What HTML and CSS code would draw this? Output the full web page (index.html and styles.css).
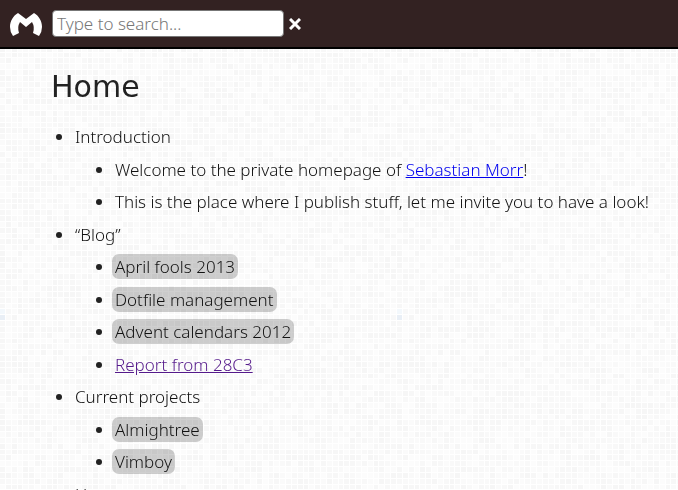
FILE: index.html
```html
<!DOCTYPE html>
<html lang="en">
<head>
<meta charset="utf-8">
<title>Home</title>
<link rel="stylesheet" href="styles.css">
</head>
<body>
<svg class="backdrop" aria-hidden="true"><defs><pattern id="tiles" width="397" height="397" patternUnits="userSpaceOnUse"></pattern></defs><rect width="100%" height="100%" fill="url(#tiles)"/></svg>
<header class="bar">
  <a class="logo" href="#" aria-label="Home"><svg viewBox="0 0 32 24" width="32" height="24"><path fill="#fff" d="M8 0 16 6 24 0C29 3 32 8 32 14Q32 19 29 23L23 20Q25 14 22 9L16 14 10 9Q7 14 9 20L3 23Q0 19 0 14C0 8 3 3 8 0Z"/></svg></a>
  <input class="search" type="text" placeholder="Type to search..." aria-label="Search">
  <button class="clear" type="button" aria-label="Clear search"><svg viewBox="0 0 12 12" width="12" height="12"><path d="M1 1 11 11M11 1 1 11" fill="none" stroke="#fff" stroke-width="3"/></svg></button>
</header>
<main class="page">
  <h1>Home</h1>
  <ul class="tree">
    <li>Introduction
      <ul>
        <li>Welcome to the private homepage of <a href="#">Sebastian Morr</a>!</li>
        <li>This is the place where I publish stuff, let me invite you to have a look!</li>
      </ul>
    </li>
    <li>“Blog”
      <ul>
        <li><a class="tag" href="#">April fools 2013</a></li>
        <li><a class="tag" href="#">Dotfile management</a></li>
        <li><a class="tag" href="#">Advent calendars 2012</a></li>
        <li><a class="visited" href="#">Report from 28C3</a></li>
      </ul>
    </li>
    <li>Current projects
      <ul>
        <li><a class="tag" href="#">Almightree</a></li>
        <li><a class="tag" href="#">Vimboy</a></li>
      </ul>
    </li>
    <li>Hu</li>
  </ul>
</main>
<script src="tiles.js"></script>
</body>
</html>
```
FILE: styles.css
```css
* { box-sizing: border-box; }
html { height: 100%; overflow: hidden; }
body {
  margin: 0;
  height: 100%;
  background: #fff;
  color: #111;
  font: 300 17px/1.5 "Noto Sans", sans-serif;
}
.backdrop { position: fixed; inset: 0; width: 100%; height: 100%; z-index: -1; }
.bar {
  display: flex;
  align-items: center;
  height: 49px;
  padding: 0 10px;
  background: #322;
  border-bottom: 2px solid #000;
}
.logo { display: flex; margin-right: 10px; padding-top: 2px; }
.search {
  width: 232px;
  height: 27px;
  padding: 0 4px;
  border: 1px solid #777;
  border-radius: 4px;
  background: #fff;
  color: #222;
  font: inherit;
}
.search::placeholder { color: #777; opacity: 1; }
.clear { display: flex; margin-left: 5px; padding: 0; border: 0; background: none; }
.page { padding: 0 0 0 51px; }
h1 { margin: 16px 0 8px; color: #222; font: normal 400 30px/44px "DejaVu Sans", sans-serif; }
ul { margin: 0; padding: 0 0 0 40px; list-style: disc; }
.tree { padding-left: 24px; }
li { padding-top: 7px; }
li::marker { color: #222; }
a { color: #00e; }
.visited { color: #551a8b; }
.tag {
  margin: 0 -3px;
  padding: 1px 3px;
  border-radius: 7px;
  background: rgba(0, 0, 0, 0.19);
  color: #111;
  text-decoration: none;
}
```
FILE: tiles.js
```js
const pattern = document.getElementById("tiles");
const count = 68;
const size = 397;
let seed = 28;
const random = () => (seed = (seed * 16807) % 2147483647) / 2147483647;
const edge = i => Math.round(i * size / count);

function addTile(col, row, fill) {
  const tile = document.createElementNS("http://www.w3.org/2000/svg", "rect");
  tile.setAttribute("x", edge(col));
  tile.setAttribute("y", edge(row));
  tile.setAttribute("width", edge(col + 1) - edge(col) - 1);
  tile.setAttribute("height", edge(row + 1) - edge(row) - 1);
  tile.setAttribute("fill", fill);
  pattern.append(tile);
}

for (let row = 0; row < count; row++) {
  for (let col = 0; col < count; col++) {
    const shade = 252 - Math.floor(random() * 7);
    addTile(col, row, `rgb(${shade},${shade},${shade})`);
  }
}
addTile(0, 53, "#f3f8fc");
addTile(0, 54, "#e9eff6");
```
